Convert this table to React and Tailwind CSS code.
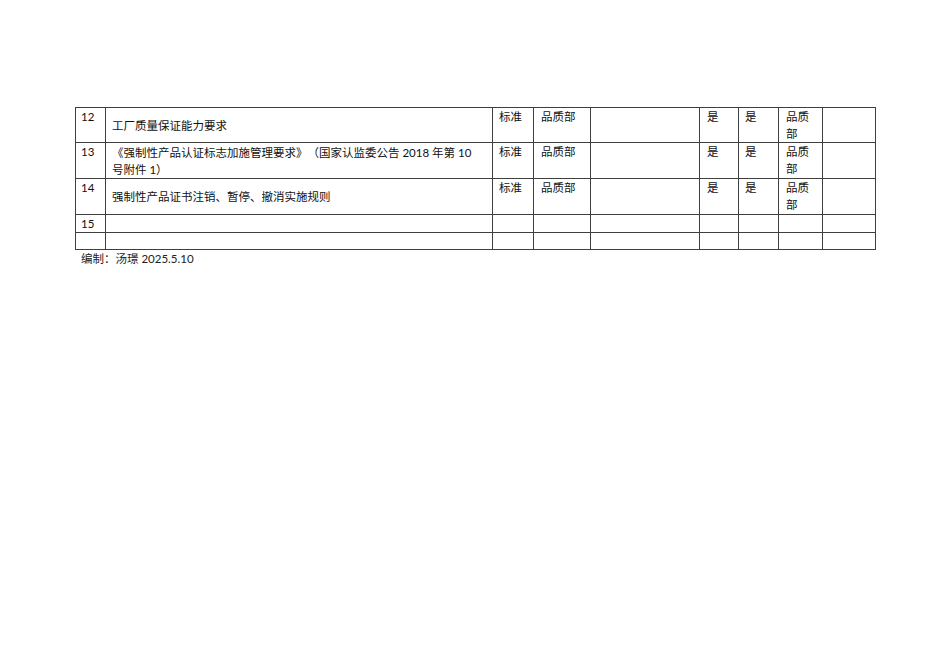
export default function App() {
  const rows = [
    { no: '12', name: '工厂质量保证能力要求', h: 'h-[35px]' },
    { no: '13', name: '《强制性产品认证标志加施管理要求》（国家认监委公告 2018 年第 10 号附件 1）', h: 'h-[36px]' },
    { no: '14', name: '强制性产品证书注销、暂停、撤消实施规则', h: 'h-[36px]' },
  ]
  const td = 'border border-[#3f3f3f] align-top px-[6px] py-0'

  return (
    <div
      className="min-h-[672px] w-[950px] bg-white pt-[107px] pl-[75px] text-[11.5px] leading-[17px] text-[#111] [text-spacing-trim:space-all]"
      style={{ fontFamily: 'Lato, "Noto Sans CJK SC", sans-serif' }}
    >
      <table className="w-[800px] table-fixed border-collapse">
        <colgroup>
          <col className="w-[30px]" />
          <col className="w-[387px]" />
          <col className="w-[41px]" />
          <col className="w-[57px]" />
          <col className="w-[109px]" />
          <col className="w-[39px]" />
          <col className="w-[40px]" />
          <col className="w-[44px]" />
          <col className="w-[53px]" />
        </colgroup>
        <tbody>
          {rows.map((r) => (
            <tr key={r.no}>
              <td className={td + ' pl-[5px] ' + r.h}>{r.no}</td>
              <td className="border border-[#3f3f3f] align-middle pl-[6px] pr-[14px] py-0">{r.name}</td>
              <td className={td}>标准</td>
              <td className={td + ' pl-[7px]'}>品质部</td>
              <td className={td}></td>
              <td className={td + ' pl-[7px]'}>是</td>
              <td className={td + ' pl-[6px]'}>是</td>
              <td className={td + ' pl-[7px] pr-[7px]'}>品质部</td>
              <td className={td}></td>
            </tr>
          ))}
          <tr>
            <td className={td + ' h-[17px] pl-[5px]'}>15</td>
            {[0, 1, 2, 3, 4, 5, 6, 7].map((i) => (
              <td key={i} className={td}></td>
            ))}
          </tr>
          <tr>
            {[0, 1, 2, 3, 4, 5, 6, 7, 8].map((i) => (
              <td key={i} className={td + ' h-[17px]'}></td>
            ))}
          </tr>
        </tbody>
      </table>
      <div className="pl-[6px] text-[#222]">编制：汤璟 2025.5.10</div>
    </div>
  )
}
